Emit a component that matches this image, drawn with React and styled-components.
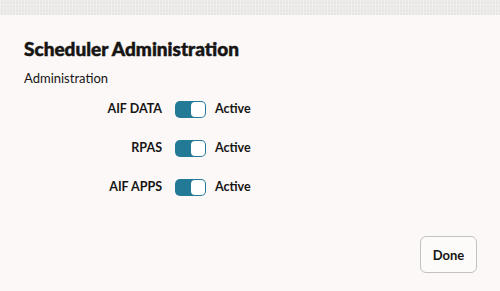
import React, { useState } from 'react'
import styled, { createGlobalStyle } from 'styled-components'

const Global = createGlobalStyle`
html, body {
    margin:0;
    padding:0;
    background:#fcf8f7;
}
body {
    font-family: Lato, "Noto Sans", sans-serif;
    color:#161513;
}
`;

const Page = styled.div`
width:500px;
height:291px;
display:flex;
flex-direction:column;
background:#fcf8f7;
overflow:hidden;
`;

const TopBand = styled.div`
height:15px;
flex-shrink:0;
background-color:#ebe9e8;
background-image:repeating-linear-gradient(90deg, rgba(255,255,255,.3) 0 1px, transparent 1px 3px),
    repeating-linear-gradient(0deg, rgba(0,0,0,.02) 0 1px, transparent 1px 4px);
`;

const Body = styled.div`
flex:1;
display:flex;
flex-direction:column;
padding:21px 23px 18px 24px;
`;

const Title = styled.h1`
margin:0;
font-size:19px;
font-weight:900;
line-height:25px;
-webkit-text-stroke:0.5px #161513;
`;

const Sub = styled.div`
margin-top:8px;
font-size:13px;
line-height:18px;
`;

const Rows = styled.div`
display:grid;
grid-template-columns:138px auto auto;
justify-content:start;
row-gap:21px;
align-items:center;
margin-top:13px;
`;

const Label = styled.div`
font-size:12.5px;
font-weight:700;
line-height:18px;
text-align:right;
`;

const Track = styled.button`
width:31px;
height:17px;
padding:0 1px;
margin:0 9px 0 13px;
border-radius:5px;
border:none;
background:${p => p.on ? '#227a97' : '#c9c6c3'};
display:flex;
justify-content:${p => p.on ? 'flex-end' : 'flex-start'};
align-items:center;
cursor:pointer;
`;

const Knob = styled.span`
width:14px;
height:15px;
border-radius:4px;
background:#fff;
`;

const State = styled.div`
font-size:12.5px;
font-weight:700;
line-height:18px;
`;

const Footer = styled.div`
margin-top:auto;
display:flex;
justify-content:flex-end;
`;

const DoneButton = styled.button`
width:57px;
height:37px;
border:1px solid #c4c2bf;
border-radius:6px;
background:#fdfbfa;
font-family:inherit;
font-size:13px;
font-weight:700;
color:#161513;
`;

const items = ['AIF DATA', 'RPAS', 'AIF APPS'];

export default function App() {
    const [state, setState] = useState([true, true, true])

    function toggle(i) {
        setState(prev => prev.map((v, j) => j === i ? !v : v))
    }

    return (
        <Page>
            <Global />
            <TopBand />
            <Body>
                <Title>Scheduler Administration</Title>
                <Sub>Administration</Sub>
                <Rows>
                    {items.map((name, i) => (
                        <React.Fragment key={name}>
                            <Label>{name}</Label>
                            <Track on={state[i] ? 1 : 0} onClick={() => toggle(i)}>
                                <Knob />
                            </Track>
                            <State>{state[i] ? 'Active' : 'Inactive'}</State>
                        </React.Fragment>
                    ))}
                </Rows>
                <Footer>
                    <DoneButton>Done</DoneButton>
                </Footer>
            </Body>
        </Page>
    )
}
